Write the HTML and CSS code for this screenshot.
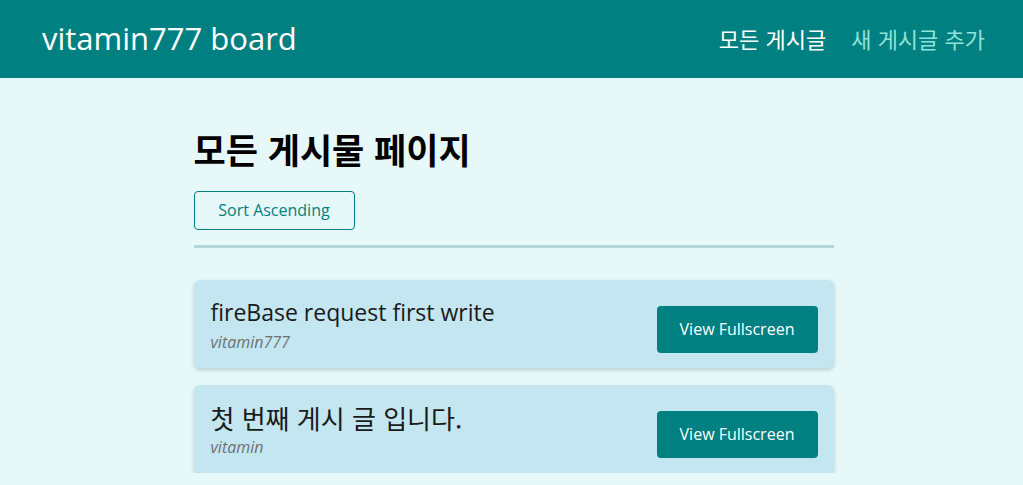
FILE: index.html
```html
<!DOCTYPE html>
<html lang="ko">
<head>
<meta charset="utf-8">
<title>vitamin777 board</title>
<link rel="stylesheet" href="styles.css">
</head>
<body>
<header class="header">
  <div class="logo">vitamin777 board</div>
  <nav class="nav">
    <a class="nav-link active" href="#">모든 게시글</a>
    <a class="nav-link" href="#">새 게시글 추가</a>
  </nav>
</header>
<main class="main">
  <h1 class="page-title">모든 게시물 페이지</h1>
  <button class="sort-btn">Sort Ascending</button>
  <hr class="divider">
  <ul class="post-list">
    <li class="post">
      <div class="post-info">
        <div class="post-title">fireBase request first write</div>
        <div class="post-author">vitamin777</div>
      </div>
      <button class="view-btn">View Fullscreen</button>
    </li>
    <li class="post">
      <div class="post-info">
        <div class="post-title post-title--ko">첫 번째 게시 글 입니다.</div>
        <div class="post-author">vitamin</div>
      </div>
      <button class="view-btn">View Fullscreen</button>
    </li>
  </ul>
</main>
</body>
</html>
```
FILE: styles.css
```css
* { box-sizing: border-box; }
html, body { margin: 0; padding: 0; }
body {
  background: #e6f8f8;
  font-family: "Open Sans", "Noto Sans CJK KR", sans-serif;
  color: #1a1a1a;
}
.header {
  height: 78px;
  background: #008080;
  display: flex;
  align-items: center;
  justify-content: space-between;
  padding: 0 38px 0 42px;
}
.logo {
  color: #ffffff;
  font-size: 31px;
  padding-bottom: 2px;
}
.nav {
  display: flex;
  gap: 25px;
  padding-bottom: 2px;
}
.nav-link {
  font-family: "Noto Sans CJK KR", sans-serif;
  font-size: 22px;
  text-decoration: none;
  color: #8fe3d8;
}
.nav-link.active { color: #ffffff; }
.main {
  width: 640px;
  margin: 0 auto;
  padding-top: 48px;
  position: relative;
  left: 2px;
}
.page-title {
  font-family: "Noto Sans CJK KR", sans-serif;
  font-size: 35px;
  font-weight: 700;
  margin: 0 0 19px;
  line-height: 1.3;
  color: #000;
}
.sort-btn {
  font-family: "Open Sans", sans-serif;
  font-size: 16px;
  color: #008080;
  background: transparent;
  border: 1px solid #008080;
  border-radius: 4px;
  width: 161px;
  height: 39px;
  padding: 0;
}
.divider {
  border: 0;
  height: 3px;
  background: #b4d8d7;
  margin: 15px 0 32px;
}
.post-list {
  list-style: none;
  margin: 0;
  padding: 0;
  display: flex;
  flex-direction: column;
  gap: 17px;
}
.post {
  background: #c3e6f0;
  border-radius: 6px;
  box-shadow: 0 2px 4px rgba(0,0,0,0.18);
  height: 88px;
  display: flex;
  align-items: center;
  justify-content: space-between;
  padding: 4px 16px 0 17px;
}
.post-title {
  font-size: 23px;
  color: #1a1a1a;
  line-height: 1.3;
}
.post-title--ko {
  font-family: "Noto Sans CJK KR", sans-serif;
  font-size: 26px;
  line-height: 1.15;
}
.post-author {
  font-size: 16px;
  font-style: italic;
  color: #707070;
  margin-top: 3px;
}
.view-btn {
  font-family: "Open Sans", sans-serif;
  font-size: 16px;
  color: #fff;
  background: #008080;
  border: 0;
  border-radius: 4px;
  width: 161px;
  height: 47px;
  padding: 0;
  margin-top: 7px;
}
```
